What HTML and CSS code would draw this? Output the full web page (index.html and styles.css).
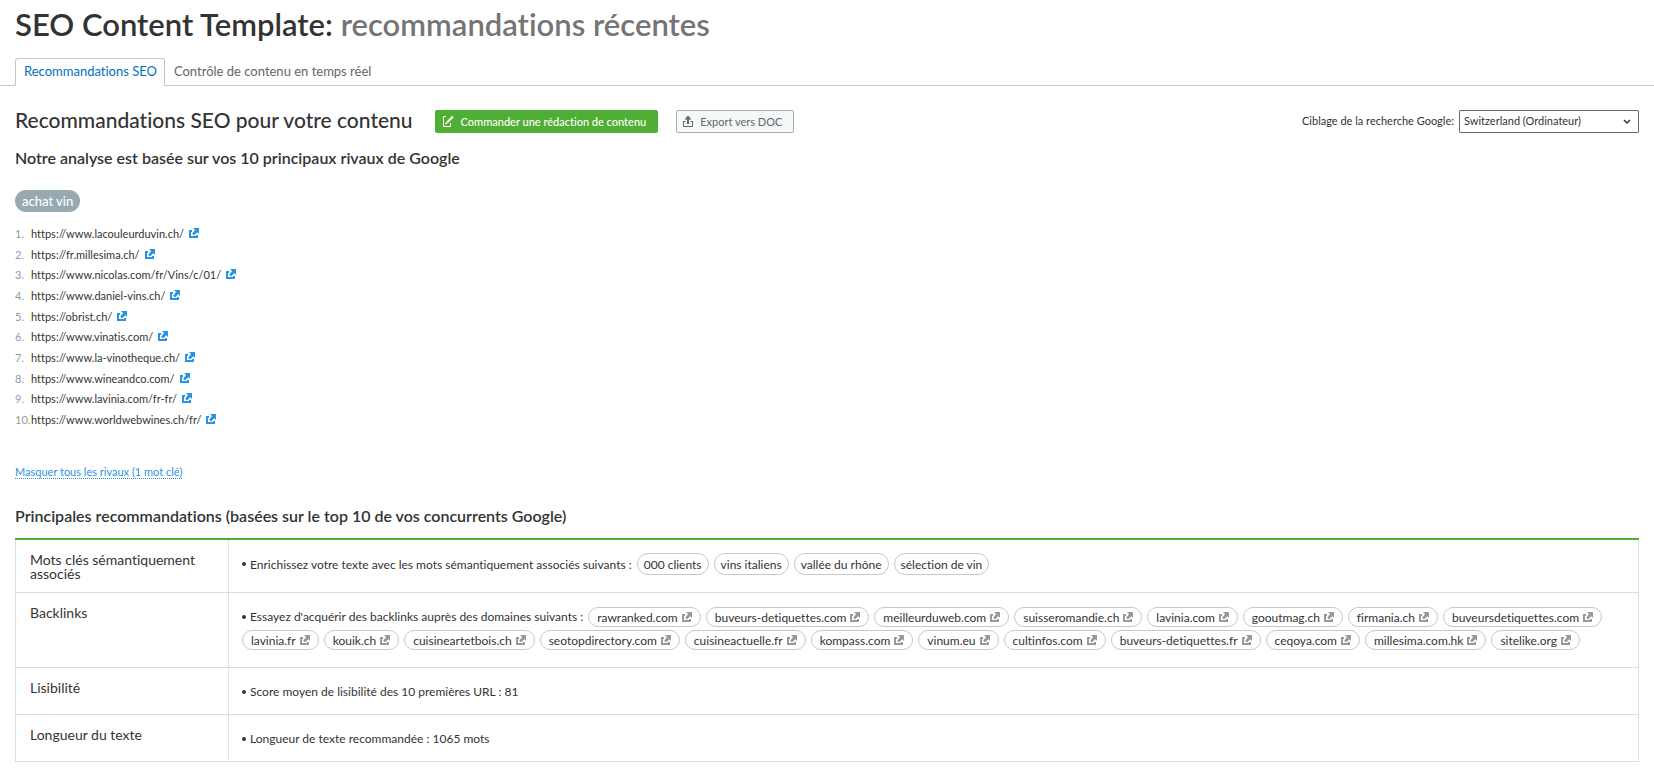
FILE: index.html
```
<!DOCTYPE html>
<html lang="fr">
<head>
    <meta charset="UTF-8">
    <meta name="viewport" content="width=device-width, initial-scale=1.0">
    <title>SEO Content Template</title>
    <link rel="stylesheet" href="styles.css">
</head>
<body>
    <svg class="sprite" aria-hidden="true">
        <symbol id="ext" viewBox="0 0 10 10">
            <path d="M0 2h3v2H2v4h5V7h2v3H0z" fill="currentColor"/>
            <path d="M4 0h6v6L8.300 4.300 5 7.500 3.200 5.700 6 2z" fill="currentColor"/>
        </symbol>
    </svg>
    <header>
        <h1>SEO Content Template: <span>recommandations récentes</span></h1>
        <nav class="tabs">
            <a class="tab active" href="#">Recommandations SEO</a>
            <a class="tab" href="#">Contrôle de contenu en temps réel</a>
        </nav>
    </header>
    <main>
        <div class="toolbar">
            <h2>Recommandations SEO pour votre contenu</h2>
            <button class="btn btn-green" type="button">
                <svg width="12" height="12" viewBox="0 0 12 12" fill="none" stroke="currentColor"><path d="M4 1.5H1.500v10h7V8"/><path d="M5 7.500L11 1.500" stroke-width="2"/><path d="M3 9.500l.7-2.500L5.500 8.800z" fill="currentColor" stroke="none"/></svg>
                Commander une rédaction de contenu
            </button>
            <button class="btn btn-grey" type="button">
                <svg width="10" height="12" viewBox="0 0 10 12" fill="none" stroke="currentColor"><path d="M2.500 6.500h-2v5h9v-5h-2"/><path d="M5 3v6" stroke-width="2"/><path d="M1.500 4.500L5 .5l3.500 4z" fill="currentColor" stroke="none"/></svg>
                Export vers DOC
            </button>
            <div class="target">
                <label for="target">Ciblage de la recherche Google:</label>
                <div class="select">
                    <select id="target">
                        <option>Switzerland (Ordinateur)</option>
                    </select>
                    <svg width="8" height="6" viewBox="0 0 8 6" fill="none" stroke="currentColor" stroke-width="1.500"><path d="M1 1l3 3 3-3"/></svg>
                </div>
            </div>
        </div>

        <h3>Notre analyse est basée sur vos 10 principaux rivaux de Google</h3>
        <span class="keyword">achat vin</span>
        <ol class="rivals">
            <li>https://www.lacouleurduvin.ch/ <a href="#" aria-label="Ouvrir"><svg class="ext"><use href="#ext"/></svg></a></li>
            <li>https://fr.millesima.ch/ <a href="#" aria-label="Ouvrir"><svg class="ext"><use href="#ext"/></svg></a></li>
            <li>https://www.nicolas.com/fr/Vins/c/01/ <a href="#" aria-label="Ouvrir"><svg class="ext"><use href="#ext"/></svg></a></li>
            <li>https://www.daniel-vins.ch/ <a href="#" aria-label="Ouvrir"><svg class="ext"><use href="#ext"/></svg></a></li>
            <li>https://obrist.ch/ <a href="#" aria-label="Ouvrir"><svg class="ext"><use href="#ext"/></svg></a></li>
            <li>https://www.vinatis.com/ <a href="#" aria-label="Ouvrir"><svg class="ext"><use href="#ext"/></svg></a></li>
            <li>https://www.la-vinotheque.ch/ <a href="#" aria-label="Ouvrir"><svg class="ext"><use href="#ext"/></svg></a></li>
            <li>https://www.wineandco.com/ <a href="#" aria-label="Ouvrir"><svg class="ext"><use href="#ext"/></svg></a></li>
            <li>https://www.lavinia.com/fr-fr/ <a href="#" aria-label="Ouvrir"><svg class="ext"><use href="#ext"/></svg></a></li>
            <li>https://www.worldwebwines.ch/fr/ <a href="#" aria-label="Ouvrir"><svg class="ext"><use href="#ext"/></svg></a></li>
        </ol>
        <a class="toggle" href="#">Masquer tous les rivaux (1 mot clé)</a>

        <h3>Principales recommandations (basées sur le top 10 de vos concurrents Google)</h3>
        <table class="tips">
            <tr>
                <th scope="row">Mots clés sémantiquement associés</th>
                <td>
                    <div class="tags">
                        <span class="tip">Enrichissez votre texte avec les mots sémantiquement associés suivants :</span>
                        <span class="tag word">000 clients</span>
                        <span class="tag word">vins italiens</span>
                        <span class="tag word">vallée du rhône</span>
                        <span class="tag word">sélection de vin</span>
                    </div>
                </td>
            </tr>
            <tr>
                <th scope="row">Backlinks</th>
                <td>
                    <div class="tags">
                        <span class="tip">Essayez d'acquérir des backlinks auprès des domaines suivants :</span>
                        <a class="tag" href="#">rawranked.com<svg class="ext"><use href="#ext"/></svg></a>
                        <a class="tag" href="#">buveurs-detiquettes.com<svg class="ext"><use href="#ext"/></svg></a>
                        <a class="tag" href="#">meilleurduweb.com<svg class="ext"><use href="#ext"/></svg></a>
                        <a class="tag" href="#">suisseromandie.ch<svg class="ext"><use href="#ext"/></svg></a>
                        <a class="tag" href="#">lavinia.com<svg class="ext"><use href="#ext"/></svg></a>
                        <a class="tag" href="#">gooutmag.ch<svg class="ext"><use href="#ext"/></svg></a>
                        <a class="tag" href="#">firmania.ch<svg class="ext"><use href="#ext"/></svg></a>
                        <a class="tag" href="#">buveursdetiquettes.com<svg class="ext"><use href="#ext"/></svg></a>
                        <a class="tag" href="#">lavinia.fr<svg class="ext"><use href="#ext"/></svg></a>
                        <a class="tag" href="#">kouik.ch<svg class="ext"><use href="#ext"/></svg></a>
                        <a class="tag" href="#">cuisineartetbois.ch<svg class="ext"><use href="#ext"/></svg></a>
                        <a class="tag" href="#">seotopdirectory.com<svg class="ext"><use href="#ext"/></svg></a>
                        <a class="tag" href="#">cuisineactuelle.fr<svg class="ext"><use href="#ext"/></svg></a>
                        <a class="tag" href="#">kompass.com<svg class="ext"><use href="#ext"/></svg></a>
                        <a class="tag" href="#">vinum.eu<svg class="ext"><use href="#ext"/></svg></a>
                        <a class="tag" href="#">cultinfos.com<svg class="ext"><use href="#ext"/></svg></a>
                        <a class="tag" href="#">buveurs-detiquettes.fr<svg class="ext"><use href="#ext"/></svg></a>
                        <a class="tag" href="#">ceqoya.com<svg class="ext"><use href="#ext"/></svg></a>
                        <a class="tag" href="#">millesima.com.hk<svg class="ext"><use href="#ext"/></svg></a>
                        <a class="tag" href="#">sitelike.org<svg class="ext"><use href="#ext"/></svg></a>
                    </div>
                </td>
            </tr>
            <tr>
                <th scope="row">Lisibilité</th>
                <td><span class="tip">Score moyen de lisibilité des 10 premières URL : 81</span></td>
            </tr>
            <tr>
                <th scope="row">Longueur du texte</th>
                <td><span class="tip">Longueur de texte recommandée : 1065 mots</span></td>
            </tr>
        </table>
    </main>
</body>
</html>
```
FILE: styles.css
```
* {
    box-sizing: border-box;
}
body {
    margin: 0;
    background-color: #fff;
    color: #333;
    font-family: Lato, "Open Sans", sans-serif;
    font-size: 12px;
    font-variant-ligatures: none;
}
h1, h2, h3 {
    margin: 0;
    font-weight: 600;
}
.sprite {
    display: none;
}
.ext {
    width: 10px;
    height: 10px;
}

/* header */
h1 {
    padding: 5px 15px 15px;
    font-size: 31px;
    line-height: 38px;
}
h1 span {
    color: #757575;
}
.tabs {
    display: flex;
    padding: 0 15px;
    border-bottom: 1px solid #c4c7c7;
}
.tab {
    margin-bottom: -1px;
    padding: 0 7px 2px 8px;
    border: 1px solid transparent;
    color: #666;
    font-size: 13px;
    line-height: 24px;
    text-decoration: none;
}
.tab.active {
    border-color: #c4c7c7;
    border-bottom-color: #fff;
    border-radius: 3px 3px 0 0;
    background-color: #fff;
    color: #0071bc;
}

/* content */
main {
    padding: 24px 15px;
}
.toolbar {
    display: flex;
    align-items: center;
    margin-bottom: 14px;
}
h2 {
    margin-right: 18px;
    padding-bottom: 3px;
    font-size: 21px;
    font-weight: 500;
    line-height: 20px;
}
h3 {
    font-size: 16px;
    line-height: 22px;
}
.btn {
    display: flex;
    align-items: center;
    height: 23px;
    margin-right: 18px;
    padding: 0 11px 1px 6px;
    border: 1px solid #4fae33;
    border-radius: 2px;
    font: 500 11px Lato, sans-serif;
    font-variant-ligatures: none;
}
h2 + .btn {
    margin-left: 4px;
}
.btn svg {
    margin-right: 7px;
}
.btn-green {
    background-color: #4fae33;
    color: #fff;
}
.btn-grey {
    border-color: #a6b0b3;
    background-color: #f5f8f8;
    color: #666;
    font-weight: 400;
}
.target {
    display: flex;
    align-items: center;
    gap: 5px;
    margin-left: auto;
    font-size: 11px;
}
.target label {
    padding-bottom: 2px;
}
.select {
    display: grid;
    align-items: center;
}
.select select, .select svg {
    grid-area: 1 / 1;
}
.select select {
    width: 180px;
    height: 23px;
    padding: 0 4px 2px;
    border: 1px solid #5c7078;
    border-radius: 1px;
    background-color: #fff;
    color: #333;
    font: 11px Lato, sans-serif;
    appearance: none;
}
.select svg {
    justify-self: end;
    margin-right: 8px;
    pointer-events: none;
}
.keyword {
    display: inline-block;
    margin: 21px 0 12px;
    padding: 0 7px;
    border-radius: 11px;
    background-color: #98a9b0;
    color: #fff;
    font-size: 13px;
    font-weight: 500;
    line-height: 22px;
}
.rivals {
    display: flex;
    flex-direction: column;
    justify-content: space-between;
    min-height: 206px;
    margin: 0 0 34px;
    padding: 0;
    list-style: none;
    counter-reset: rival;
    font-size: 11px;
    line-height: 20px;
}
.rivals li {
    display: flex;
    align-items: center;
    counter-increment: rival;
}
.rivals li::before {
    content: counter(rival) ".";
    width: 16px;
    color: #999;
}
.rivals a {
    display: flex;
    margin-left: 5px;
    padding-bottom: 2px;
    color: #2b94e1;
}
.toggle {
    display: inline-block;
    margin-bottom: 26px;
    border-bottom: 1px dotted #2b94e1;
    color: #2b94e1;
    font-size: 11px;
    line-height: 12px;
    text-decoration: none;
}

/* recommendations table */
.tips {
    width: 100%;
    margin-top: 11px;
    border-top: 2px solid #4fae33;
    border-spacing: 0;
}
.tips th, .tips td {
    border-bottom: 1px solid #dcdcdc;
    vertical-align: top;
}
.tips th {
    width: 214px;
    padding: 13px 15px 10px 14px;
    border-left: 1px solid #dcdcdc;
    border-right: 1px dotted #c4c7c7;
    font-size: 14px;
    font-weight: 400;
    line-height: 14px;
    text-align: left;
}
.tips td {
    padding: 12px 13px 11px;
    border-right: 1px solid #dcdcdc;
}
.tip {
    display: flex;
    align-items: center;
    line-height: 23px;
}
.tip::before {
    content: "";
    width: 4px;
    height: 4px;
    margin-right: 4px;
    border-radius: 50%;
    background-color: #333;
}
.tags {
    display: flex;
    flex-wrap: wrap;
    column-gap: 5px;
    margin-bottom: 5px;
}
.tag {
    display: flex;
    align-items: center;
    height: 20px;
    margin: 2px 0 1px;
    padding: 0 8px;
    border: 1px solid #c8c8c8;
    border-radius: 11px;
    color: #333;
    text-decoration: none;
}
.tag.word {
    height: 22px;
    margin: 1px 0;
    padding: 0 6px;
}
.tag .ext {
    margin-left: 4px;
    color: #999;
}
```
